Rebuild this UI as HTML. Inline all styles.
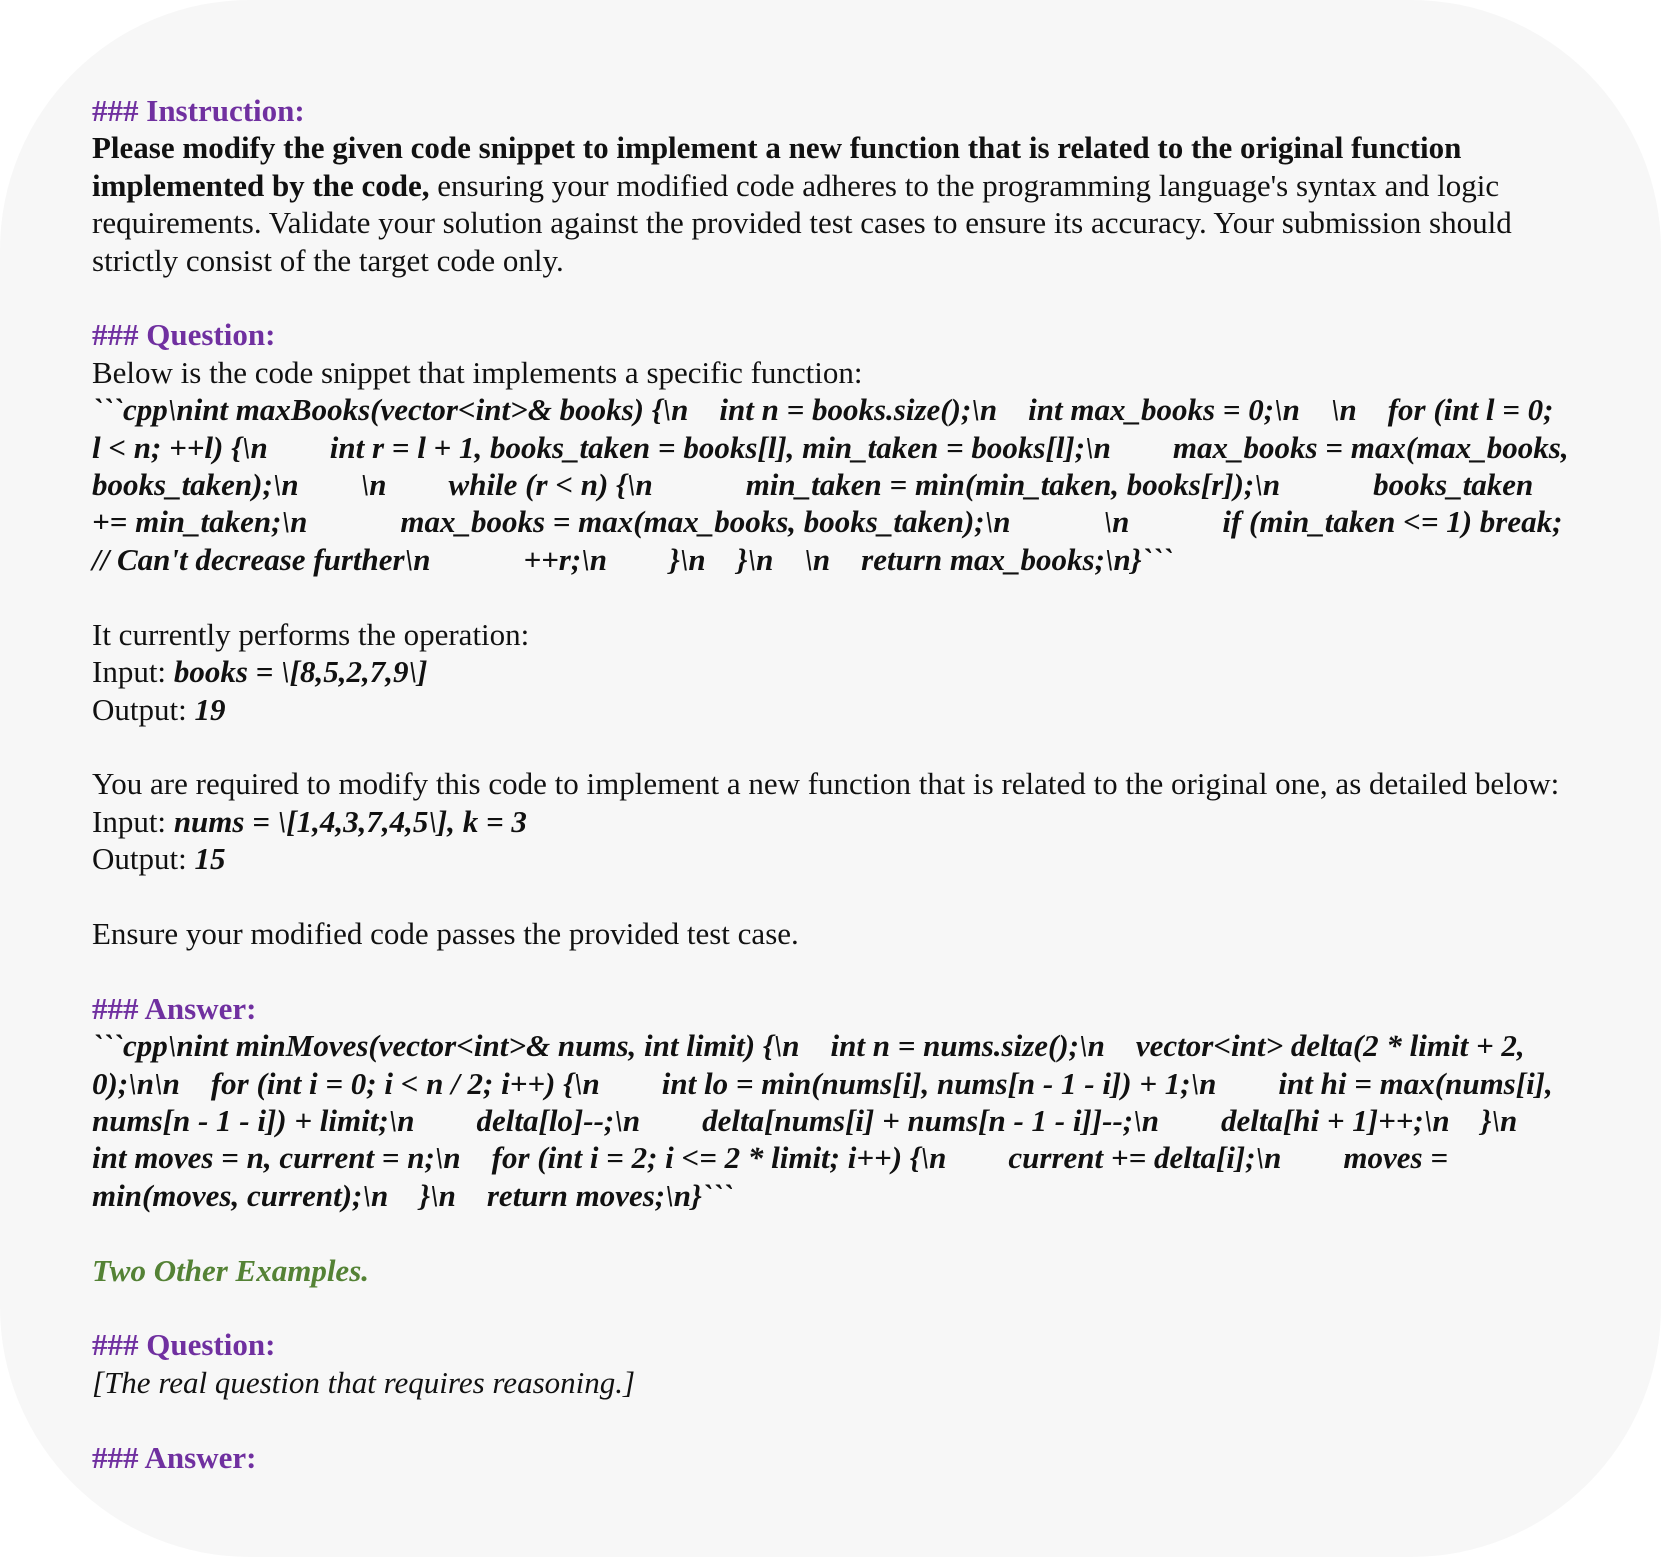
<!DOCTYPE html>
<html><head><meta charset="utf-8"><style>
html,body{margin:0;padding:0;background:#fff;}
body{width:1661px;height:1557px;overflow:hidden;position:relative;}
.card{position:absolute;left:0;top:0;width:1661px;height:1557px;background:#f7f7f7;border-radius:250px;}
.txt{position:absolute;left:92px;top:92px;width:1560px;font-family:"Liberation Serif",serif;font-size:31px;line-height:37.4px;color:#111;white-space:pre;}
.h{color:#7030a0;font-weight:bold;}
.g{color:#548235;font-weight:bold;font-style:italic;}
.c{font-weight:bold;font-style:italic;}
</style></head><body>
<div class="card"></div>
<div class="txt"><span class="h">### Instruction:</span>
<b>Please modify the given code snippet to implement a new function that is related to the original function</b>
<b>implemented by the code,</b> ensuring your modified code adheres to the programming language's syntax and logic
requirements. Validate your solution against the provided test cases to ensure its accuracy. Your submission should
strictly consist of the target code only.

<span class="h">### Question:</span>
Below is the code snippet that implements a specific function:
<span class="c">&#96;&#96;&#96;cpp\nint maxBooks(vector&lt;int&gt;&amp; books) {\n    int n = books.size();\n    int max_books = 0;\n    \n    for (int l = 0;
l &lt; n; ++l) {\n        int r = l + 1, books_taken = books[l], min_taken = books[l];\n        max_books = max(max_books,
books_taken);\n        \n        while (r &lt; n) {\n            min_taken = min(min_taken, books[r]);\n            books_taken
+= min_taken;\n            max_books = max(max_books, books_taken);\n            \n            if (min_taken &lt;= 1) break;
// Can't decrease further\n            ++r;\n        }\n    }\n    \n    return max_books;\n}&#96;&#96;&#96;</span>

It currently performs the operation:
Input: <span class="c">books = \[8,5,2,7,9\]</span>
Output: <span class="c">19</span>

You are required to modify this code to implement a new function that is related to the original one, as detailed below:
Input: <span class="c">nums = \[1,4,3,7,4,5\], k = 3</span>
Output: <span class="c">15</span>

Ensure your modified code passes the provided test case.

<span class="h">### Answer:</span>
<span class="c">&#96;&#96;&#96;cpp\nint minMoves(vector&lt;int&gt;&amp; nums, int limit) {\n    int n = nums.size();\n    vector&lt;int&gt; delta(2 * limit + 2,
0);\n\n    for (int i = 0; i &lt; n / 2; i++) {\n        int lo = min(nums[i], nums[n - 1 - i]) + 1;\n        int hi = max(nums[i],
nums[n - 1 - i]) + limit;\n        delta[lo]--;\n        delta[nums[i] + nums[n - 1 - i]]--;\n        delta[hi + 1]++;\n    }\n
int moves = n, current = n;\n    for (int i = 2; i &lt;= 2 * limit; i++) {\n        current += delta[i];\n        moves =
min(moves, current);\n    }\n    return moves;\n}&#96;&#96;&#96;</span>

<span class="g">Two Other Examples.</span>

<span class="h">### Question:</span>
<i>[The real question that requires reasoning.]</i>

<span class="h">### Answer:</span></div>
</body></html>
